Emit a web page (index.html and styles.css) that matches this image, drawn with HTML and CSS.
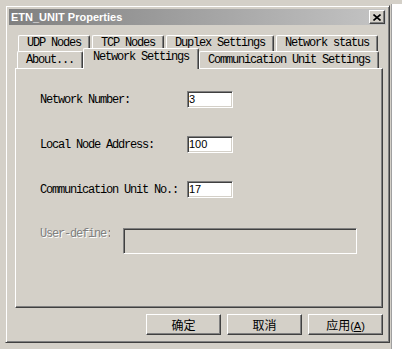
FILE: index.html
```html
<!DOCTYPE html>
<html lang="en">

<head>
	<title>ETN_UNIT Properties</title>
	<meta charset="UTF-8">
	<meta name="viewport" content="width=device-width, initial-scale=1.0">
	<link rel="stylesheet" href="styles.css">
</head>

<body>
	<div class="screen">
		<div class="window">
			<div class="titlebar">
				<span class="title">ETN_UNIT Properties</span>
				<button class="close" type="button">
					<svg width="8" height="7" viewBox="0 0 8 7">
						<path d="M0.5 0.5 L7.5 6.5 M7.5 0.5 L0.5 6.5" stroke="#000" stroke-width="1.6" fill="none"/>
					</svg>
				</button>
			</div>

			<div class="content">
				<div class="tabs">
					<div class="tab-row tab-row-back">
						<div class="tab">UDP Nodes</div>
						<div class="tab">TCP Nodes</div>
						<div class="tab">Duplex Settings</div>
						<div class="tab">Network status</div>
					</div>
					<div class="tab-row tab-row-front">
						<div class="tab">About...</div>
						<div class="tab tab-active">Network Settings</div>
						<div class="tab">Communication Unit Settings</div>
					</div>
				</div>

				<div class="panel">
					<div class="field">
						<label class="field-label">Network Number:</label>
						<div class="edit">3</div>
					</div>
					<div class="field">
						<label class="field-label">Local Node Address:</label>
						<div class="edit">100</div>
					</div>
					<div class="field">
						<label class="field-label">Communication Unit No.:</label>
						<div class="edit">17</div>
					</div>
					<div class="field field-user">
						<label class="field-label field-disabled">User-define:</label>
						<div class="edit edit-wide"></div>
					</div>
				</div>

				<div class="buttons">
					<button class="btn" type="button">确定</button>
					<button class="btn" type="button">取消</button>
					<button class="btn" type="button">应用<span class="accel">(<u>A</u>)</span></button>
				</div>
			</div>
		</div>
		<div class="side"></div>
	</div>
</body>

</html>
```

FILE: styles.css
```css
* {
	box-sizing: border-box;
}

body {
	margin: 0;
	background-color: #d4d0c8;
	overflow: hidden;
}

.screen {
	display: flex;
	height: 349px;
	padding: 5px 0 0 5px;
}

/* Window frame */
.window {
	display: flex;
	flex-direction: column;
	width: 385px;
	height: 338px;
	padding: 3px;
	background-color: #d4d0c8;
	border: 1px solid;
	border-color: #d4d0c8 #404040 #404040 #d4d0c8;
	box-shadow: inset 1px 1px #fff, inset -1px -1px #808080;
}

.side {
	flex: 1;
	margin: -1px 0 0 1px;
	background-color: #fff;
	border-left: 1px solid #a0a0a0;
}

.titlebar {
	display: flex;
	align-items: center;
	justify-content: space-between;
	height: 16px;
	padding: 0 1px 0 2px;
	background: linear-gradient(to right, #808080, #c4c4c4);
}

.title {
	color: #fff;
	font-family: "Liberation Sans", Arial, sans-serif;
	font-size: 11px;
	font-weight: bold;
}

.close {
	display: flex;
	align-items: center;
	justify-content: center;
	width: 16px;
	height: 14px;
	padding: 0;
	background-color: #d4d0c8;
	border: 1px solid;
	border-color: #fff #404040 #404040 #fff;
	box-shadow: inset -1px -1px #808080;
}

/* Content area */
.content {
	display: flex;
	flex-direction: column;
	margin: 10px 3px 0 6px;
	font-family: "Liberation Mono", "DejaVu Sans Mono", monospace;
	font-size: 12px;
	letter-spacing: -1.2px;
	color: #000;
}

.tab-row {
	display: flex;
	align-items: flex-end;
}

.tab-row-back {
	height: 16px;
	margin: 0 3px;
	gap: 2px;
}

.tab-row-front {
	height: 17px;
	margin: 0 2px;
	gap: 2px;
}

.tab {
	height: 100%;
	padding: 0 8px;
	line-height: 15px;
	white-space: nowrap;
	background-color: #d4d0c8;
	border-top: 1px solid #fff;
	border-left: 1px solid #fff;
	border-right: 1px solid #404040;
	border-radius: 2px 2px 0 0;
	box-shadow: inset -1px 0 #808080;
}

.tab-row-front .tab {
	line-height: 17px;
}

.tab-row-front .tab-active {
	position: relative;
	z-index: 1;
	height: 21px;
	margin: 0 -2px -1px;
	padding: 0 9px;
	line-height: 17px;
}

.panel {
	display: flex;
	flex-direction: column;
	gap: 28px;
	height: 240px;
	padding: 22px 0 0 24px;
	border: 1px solid;
	border-color: #fff #404040 #404040 #fff;
	box-shadow: inset -1px -1px #808080;
}

.field {
	display: flex;
	align-items: center;
}

.field-label {
	width: 147px;
	white-space: nowrap;
}

.field-user {
	align-items: flex-start;
	margin-top: 2px;
}

.field-user .field-label {
	width: 70px;
	margin-right: 13px;
	overflow: hidden;
	line-height: 12px;
}

.field-disabled {
	color: #808080;
	text-shadow: 1px 1px #fff;
}

.edit {
	width: 46px;
	height: 17px;
	padding-left: 1px;
	background-color: #fff;
	font-family: "Liberation Sans", Arial, sans-serif;
	font-size: 11px;
	letter-spacing: 0;
	line-height: 14px;
	border: 1px solid;
	border-color: #808080 #fff #fff #808080;
	box-shadow: inset 1px 1px #404040, inset -1px -1px #d4d0c8;
}

.edit-wide {
	width: 234px;
	height: 26px;
	background-color: #d4d0c8;
}

/* Dialog buttons */
.buttons {
	display: flex;
	justify-content: flex-end;
	gap: 6px;
	margin-top: 6px;
}

.btn {
	width: 75px;
	height: 21px;
	padding: 0;
	background-color: #d4d0c8;
	color: #000;
	font-family: "Noto Sans CJK SC", sans-serif;
	font-size: 12px;
	letter-spacing: 0;
	border: 1px solid;
	border-color: #fff #404040 #404040 #fff;
	box-shadow: inset -1px -1px #808080;
}

.accel {
	font-family: "Liberation Sans", Arial, sans-serif;
	font-size: 11px;
}
```
